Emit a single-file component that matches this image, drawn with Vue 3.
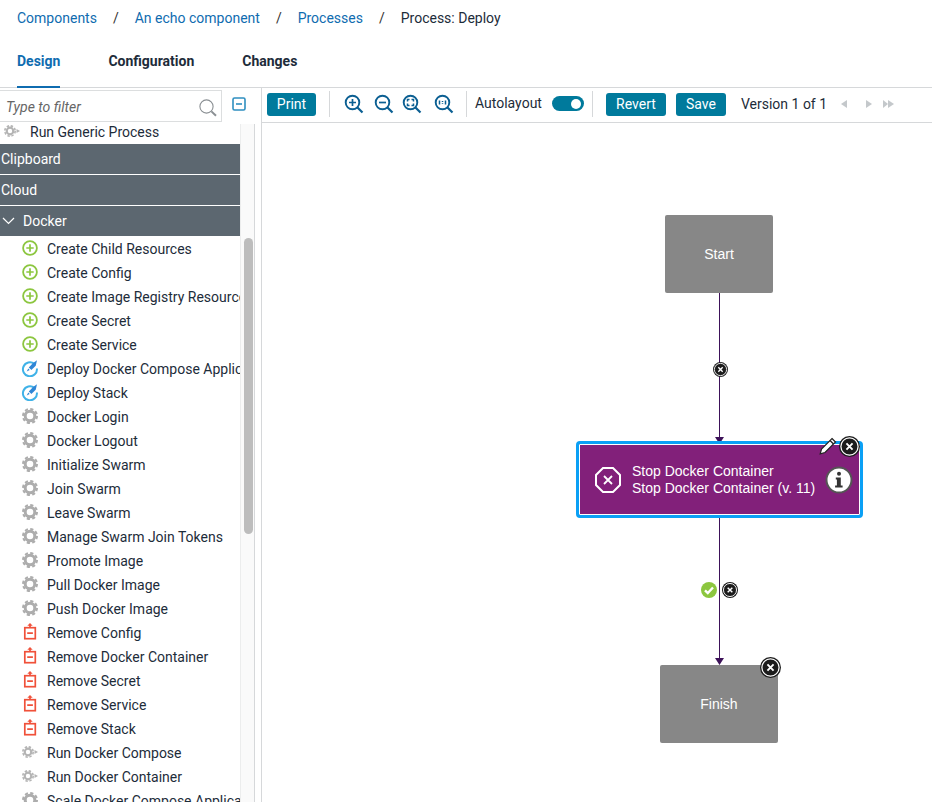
<template>
  <div class="page">
    <nav class="crumbs">
      <a>Components</a><span class="sep">/</span>
      <a>An echo component</a><span class="sep">/</span>
      <a>Processes</a><span class="sep">/</span>
      <span class="current">Process: Deploy</span>
    </nav>

    <div class="tabs">
      <div class="tab active">Design</div>
      <div class="tab">Configuration</div>
      <div class="tab">Changes</div>
    </div>

    <div class="workspace">
      <aside class="side">
        <div class="filter-row">
          <div class="filter">
            <span class="placeholder">Type to filter</span>
            <svg class="search" width="20" height="20" viewBox="0 0 20 20">
              <circle cx="8.5" cy="8.5" r="6.6" fill="none" stroke="#8a8f93" stroke-width="1.1" />
              <path d="M13.4 13.4l4.6 4.4" stroke="#8a8f93" stroke-width="2" />
            </svg>
          </div>
          <svg class="collapse" width="14" height="14" viewBox="0 0 14 14">
            <rect x="1" y="1" width="12" height="12" rx="1.5" fill="none" stroke="#2f8fc0" stroke-width="1.6" />
            <path d="M4 7h6" stroke="#2f8fc0" stroke-width="1.6" />
          </svg>
        </div>
        <div class="list-wrap">
          <div class="list">
            <div class="row first">
              <svg class="icon" width="18" height="18" viewBox="0 0 18 18"><use href="#run-icon" /></svg>
              <span class="first-label">Run Generic Process</span>
            </div>
            <div class="group">Clipboard</div>
            <div class="group">Cloud</div>
            <div class="group open">
              <svg width="13" height="8" viewBox="0 0 13 8"><path d="M1 1l5.5 5.5L12 1" fill="none" stroke="#fff" stroke-width="1.2" /></svg>
              Docker
            </div>
            <div v-for="item in items" :key="item.name" class="row">
              <svg class="icon" width="18" height="18" viewBox="0 0 18 18"><use :href="'#' + item.type + '-icon'" /></svg>
              <span class="label">{{ item.name }}</span>
            </div>
          </div>
          <div class="track"><div class="thumb"></div></div>
        </div>
      </aside>

      <main class="main">
        <div class="toolbar">
          <button class="btn">Print</button>
          <i class="divider d1"></i>
          <div class="zooms">
            <svg width="20" height="20" viewBox="0 0 20 20"><use href="#lens" /><path d="M5 8.5h7M8.5 5v7" stroke="#0b5f92" stroke-width="1.7" /></svg>
            <svg width="20" height="20" viewBox="0 0 20 20"><use href="#lens" /><path d="M5 8.5h7" stroke="#0b5f92" stroke-width="1.7" /></svg>
            <svg width="20" height="20" viewBox="0 0 20 20"><use href="#lens" /><path d="M5.5 7.5v-2h2M9.500 5.500h2v2M11.500 9.500v2h-2M7.500 11.500h-2v-2" fill="none" stroke="#0b5f92" stroke-width="1.500" /></svg>
            <svg width="20" height="20" viewBox="0 0 20 20"><use href="#lens" /><path d="M5.500 6.500v4M11.500 6.500v4M8.500 7v.9M8.500 9.200v.9" fill="none" stroke="#0b5f92" stroke-width="1.500" /></svg>
          </div>
          <i class="divider d2"></i>
          <span class="auto">Autolayout</span>
          <div class="toggle"><span class="knob"></span></div>
          <i class="divider d3"></i>
          <button class="btn revert">Revert</button>
          <button class="btn save">Save</button>
          <span class="version">Version 1 of 1</span>
          <svg class="pager" width="54" height="10" viewBox="0 0 54 10" fill="#c4c8cb">
            <path d="M6 1v8L0 5zM25 1v8l6-4zM42 1v8l5-4zM47 1v8l6-4z" />
          </svg>
        </div>

        <div class="canvas">
          <svg class="wires" width="670" height="680" viewBox="0 0 670 680">
            <path d="M457.500 171v150M457.500 392v150" stroke="#3d1259" stroke-width="1" />
            <path d="M453 315h9l-4.500 7zM453 536h9l-4.500 7z" fill="#3d1259" />
          </svg>

          <div class="node start">Start</div>

          <div class="node selected">
            <svg class="stop" width="28" height="28" viewBox="0 0 28 28">
              <path d="M9 2h10l7 7v10l-7 7H9l-7-7V9z" fill="none" stroke="#fff" stroke-width="2" />
              <path d="M10 10l8 8M18 10l-8 8" stroke="#fff" stroke-width="1.800" />
            </svg>
            <div class="node-text">
              <div>Stop Docker Container</div>
              <div>Stop Docker Container (v. 11)</div>
            </div>
            <svg class="info" width="28" height="28" viewBox="0 0 28 28">
              <circle cx="14" cy="14" r="12.500" fill="#fff" stroke="#555" stroke-width="2" />
              <circle cx="14" cy="7.800" r="2" fill="#333" />
              <path d="M10.800 11.500h5v8h1.800v2h-7.500v-2h1.800v-6h-1.100z" fill="#333" />
            </svg>
          </div>

          <div class="node finish">Finish</div>

          <svg class="pencil" width="18" height="18" viewBox="0 0 18 18">
            <path d="M13 1.500l3.500 3.500L6 15.500l-4.800 1.300L2.500 12z" fill="#fff" stroke="#222" stroke-width="1.200" />
            <path d="M11 3.500l3.500 3.500" stroke="#222" stroke-width="1.200" />
          </svg>
          <svg class="x big x-sel" viewBox="0 0 22 22"><use href="#close-icon" /></svg>
          <svg class="x big x-fin" viewBox="0 0 22 22"><use href="#close-icon" /></svg>
          <svg class="x small x-wire1" viewBox="0 0 22 22"><use href="#close-icon" /></svg>
          <svg class="x small x-wire2" viewBox="0 0 22 22"><use href="#close-icon" /></svg>
          <svg class="ok" width="16" height="16" viewBox="0 0 16 16">
            <circle cx="8" cy="8" r="8" fill="#8cc63f" />
            <path d="M4 8.300l2.800 2.700L12 5.500" fill="none" stroke="#fff" stroke-width="2.400" />
          </svg>
        </div>
      </main>
    </div>

    <!-- shared icon symbols -->
    <svg width="0" height="0" class="defs">
      <defs>
        <g id="plus-icon">
          <circle cx="9" cy="9" r="6.900" fill="none" stroke="#8cc63f" stroke-width="1.800" />
          <path d="M5.300 9h7.400M9 5.300v7.400" stroke="#8cc63f" stroke-width="1.700" />
        </g>
        <g id="deploy-icon">
          <path d="M13.300 4.800A7 7 0 1 0 15.900 9.500" fill="none" stroke="#3fb2e8" stroke-width="2" />
          <path d="M16 1.300l-1.300 5.400-4.300 4.300-2.600-2.600 4.300-4.300z" fill="#2f86d6" />
          <path d="M7.300 9.500l1.400 1.400-3 1.700z" fill="#2f86d6" />
        </g>
        <g id="gear-icon">
          <circle cx="9" cy="9" r="4.800" fill="none" stroke="#adadad" stroke-width="3" />
          <circle cx="9" cy="9" r="7" fill="none" stroke="#adadad" stroke-width="2" stroke-dasharray="3.200 2.300" />
        </g>
        <g id="run-icon">
          <circle cx="7" cy="9" r="3.300" fill="none" stroke="#b4b4b4" stroke-width="2.200" />
          <circle cx="7" cy="9" r="5.200" fill="none" stroke="#b4b4b4" stroke-width="1.600" stroke-dasharray="2.400 1.700" />
          <path d="M13.500 7l3.500 2-3.500 2z" fill="#b4b4b4" />
        </g>
        <g id="remove-icon">
          <rect x="3.800" y="4.700" width="10.500" height="11" fill="none" stroke="#f0513a" stroke-width="1.700" />
          <path d="M6.200 10.200h5.700M9 4.500V2" stroke="#f0513a" stroke-width="1.700" />
          <path d="M6.300 2.800h5.400L9 0z" fill="#f0513a" />
        </g>
        <g id="lens">
          <circle cx="8.500" cy="8.500" r="6.800" fill="none" stroke="#0b5f92" stroke-width="1.900" />
          <path d="M13.500 13.500l5 5" stroke="#0b5f92" stroke-width="2.200" />
        </g>
        <g id="close-icon">
          <circle cx="11" cy="11" r="11" fill="#1c1c1c" />
          <circle cx="11" cy="11" r="9" fill="none" stroke="#fff" stroke-width="1.300" />
          <path d="M7.800 7.800l6.400 6.400M14.200 7.800l-6.400 6.400" stroke="#fff" stroke-width="2" />
        </g>
      </defs>
    </svg>
  </div>
</template>

<script setup>
const items = [
  { name: 'Create Child Resources', type: 'plus' },
  { name: 'Create Config', type: 'plus' },
  { name: 'Create Image Registry Resource', type: 'plus' },
  { name: 'Create Secret', type: 'plus' },
  { name: 'Create Service', type: 'plus' },
  { name: 'Deploy Docker Compose Application', type: 'deploy' },
  { name: 'Deploy Stack', type: 'deploy' },
  { name: 'Docker Login', type: 'gear' },
  { name: 'Docker Logout', type: 'gear' },
  { name: 'Initialize Swarm', type: 'gear' },
  { name: 'Join Swarm', type: 'gear' },
  { name: 'Leave Swarm', type: 'gear' },
  { name: 'Manage Swarm Join Tokens', type: 'gear' },
  { name: 'Promote Image', type: 'gear' },
  { name: 'Pull Docker Image', type: 'gear' },
  { name: 'Push Docker Image', type: 'gear' },
  { name: 'Remove Config', type: 'remove' },
  { name: 'Remove Docker Container', type: 'remove' },
  { name: 'Remove Secret', type: 'remove' },
  { name: 'Remove Service', type: 'remove' },
  { name: 'Remove Stack', type: 'remove' },
  { name: 'Run Docker Compose', type: 'run' },
  { name: 'Run Docker Container', type: 'run' },
  { name: 'Scale Docker Compose Application', type: 'gear' }
]
</script>

<style>
html, body {
  margin: 0;
  height: 100%;
  overflow: hidden;
  background: #fff;
}
</style>

<style scoped>
.page {
  width: 932px;
  height: 802px;
  overflow: hidden;
  font-family: Roboto, "Liberation Sans", sans-serif;
  font-size: 14px;
  color: #1d2c3a;
  background: #fff;
}

.crumbs {
  height: 36px;
  padding-left: 17px;
  display: flex;
  align-items: center;
  box-sizing: border-box;
}
.crumbs a {
  color: #0f6cb0;
}
.sep {
  margin: 0 16px;
  color: #333;
}

.tabs {
  height: 52px;
  padding-left: 17px;
  display: flex;
  gap: 48px;
  border-bottom: 1px solid #d6d8da;
  box-sizing: border-box;
}
.tab {
  padding-top: 17px;
  font-weight: 700;
  height: 52px;
  box-sizing: border-box;
}
.tab.active {
  color: #0f6cb0;
  border-bottom: 2px solid #0f6cb0;
}

.workspace {
  display: flex;
  height: 714px;
}

.side {
  width: 261px;
  flex: none;
  border-right: 1px solid #d6d8da;
  box-sizing: content-box;
}
.filter-row {
  height: 36px;
  display: flex;
  align-items: flex-start;
}
.filter {
  width: 222px;
  height: 32px;
  margin-top: 2px;
  border: 1px solid #dcdedf;
  border-left: none;
  box-sizing: border-box;
  display: flex;
  align-items: center;
  justify-content: space-between;
  padding: 0 3px 0 6px;
}
.placeholder {
  font-style: italic;
  color: #666;
  margin-top: 2px;
}
.search {
  margin-top: 3px;
}
.collapse {
  margin: 9px 0 0 10px;
}

.list-wrap {
  display: flex;
  height: 678px;
}
.list {
  width: 240px;
  overflow: hidden;
  flex: none;
}
.row {
  height: 24px;
  display: flex;
  align-items: center;
  white-space: nowrap;
  padding-left: 21px;
}
.row.first {
  height: 20px;
  padding-left: 3px;
  padding-bottom: 4px;
  box-sizing: border-box;
}
.first-label {
  margin-left: 9px;
}
.label {
  margin-left: 8px;
}
.icon {
  flex: none;
  margin-top: -2px;
}
.group {
  height: 30px;
  margin-bottom: 1px;
  background: #5c6770;
  color: #fff;
  display: flex;
  align-items: center;
  padding-left: 1px;
}
.group.open {
  gap: 8px;
  padding-left: 2px;
  margin-bottom: 1px;
}

.track {
  width: 15px;
  height: 100%;
  border-left: 1px solid #eceded;
  border-right: 1px solid #d6d8da;
  box-sizing: border-box;
  background: #fafafa;
}
.thumb {
  width: 9px;
  height: 296px;
  margin: 114px 0 0 3px;
  border-radius: 5px;
  background: #bdbdbd;
}

.main {
  flex: 1;
  min-width: 0;
  display: flex;
  flex-direction: column;
}

.toolbar {
  height: 35px;
  flex: none;
  display: flex;
  align-items: center;
  border-bottom: 1px solid #d6d8da;
  box-sizing: border-box;
  padding-left: 5px;
  padding-bottom: 2px;
}
.btn {
  height: 23px;
  border: none;
  border-radius: 3px;
  background: #007a9c;
  color: #fff;
  font: 400 14px Roboto, "Liberation Sans", sans-serif;
  padding: 0;
  width: 49px;
}
.divider {
  width: 1px;
  height: 26px;
  background: #d6d8da;
  flex: none;
}
.d1 {
  margin-left: 13px;
}
.zooms {
  display: flex;
  margin-left: 14px;
  gap: 10px;
  align-items: center;
}
.zooms svg:nth-child(3) {
  margin-left: -2px;
}
.zooms svg:nth-child(4) {
  margin-left: 2px;
}
.d2 {
  margin-left: 12px;
}
.auto {
  margin-left: 8px;
  margin-top: -2px;
}
.toggle {
  width: 32px;
  height: 15px;
  margin-left: 10px;
  margin-top: -1px;
  border-radius: 8px;
  background: #007a9c;
  position: relative;
}
.knob {
  position: absolute;
  right: 3px;
  top: 2.500px;
  width: 10px;
  height: 10px;
  border-radius: 50%;
  background: #fff;
}
.d3 {
  margin-left: 8px;
}
.revert {
  width: 60px;
  margin-left: 13px;
}
.save {
  width: 50px;
  margin-left: 10px;
}
.version {
  margin-left: 15px;
}
.pager {
  margin-left: 14px;
}

.canvas {
  position: relative;
  flex: 1;
  overflow: hidden;
}
.wires {
  position: absolute;
  left: 0;
  top: -1px;
}
.node {
  position: absolute;
  box-sizing: border-box;
  color: #fff;
  display: flex;
  align-items: center;
  justify-content: center;
  font-family: "Liberation Sans", Arial, sans-serif;
}
.start {
  left: 403px;
  top: 92px;
  width: 108px;
  height: 78px;
  background: #878787;
  border-radius: 2px;
}
.finish {
  left: 398px;
  top: 542px;
  width: 118px;
  height: 78px;
  background: #878787;
  border-radius: 2px;
}
.selected {
  left: 314px;
  top: 318px;
  width: 287px;
  height: 77px;
  background: #82207a;
  border: 3px solid #0aa0f5;
  box-shadow: inset 0 0 0 1px #fff;
  border-radius: 4px;
  justify-content: flex-start;
  padding-left: 15px;
}
.stop {
  flex: none;
}
.node-text {
  margin-left: 10px;
  line-height: 17px;
  white-space: nowrap;
}
.info {
  position: absolute;
  right: 7px;
  top: 22px;
}
.pencil {
  position: absolute;
  left: 557px;
  top: 314px;
}
.x {
  position: absolute;
}
.x.big {
  width: 21px;
  height: 21px;
}
.x-sel {
  left: 577px;
  top: 313px;
}
.x-fin {
  left: 498px;
  top: 534px;
}
.x-wire1 {
  width: 15px;
  height: 15px;
  left: 451px;
  top: 239px;
}
.x-wire2 {
  width: 16px;
  height: 16px;
  left: 460px;
  top: 459px;
}
.ok {
  position: absolute;
  left: 439px;
  top: 459px;
}
.defs {
  position: absolute;
}
</style>
